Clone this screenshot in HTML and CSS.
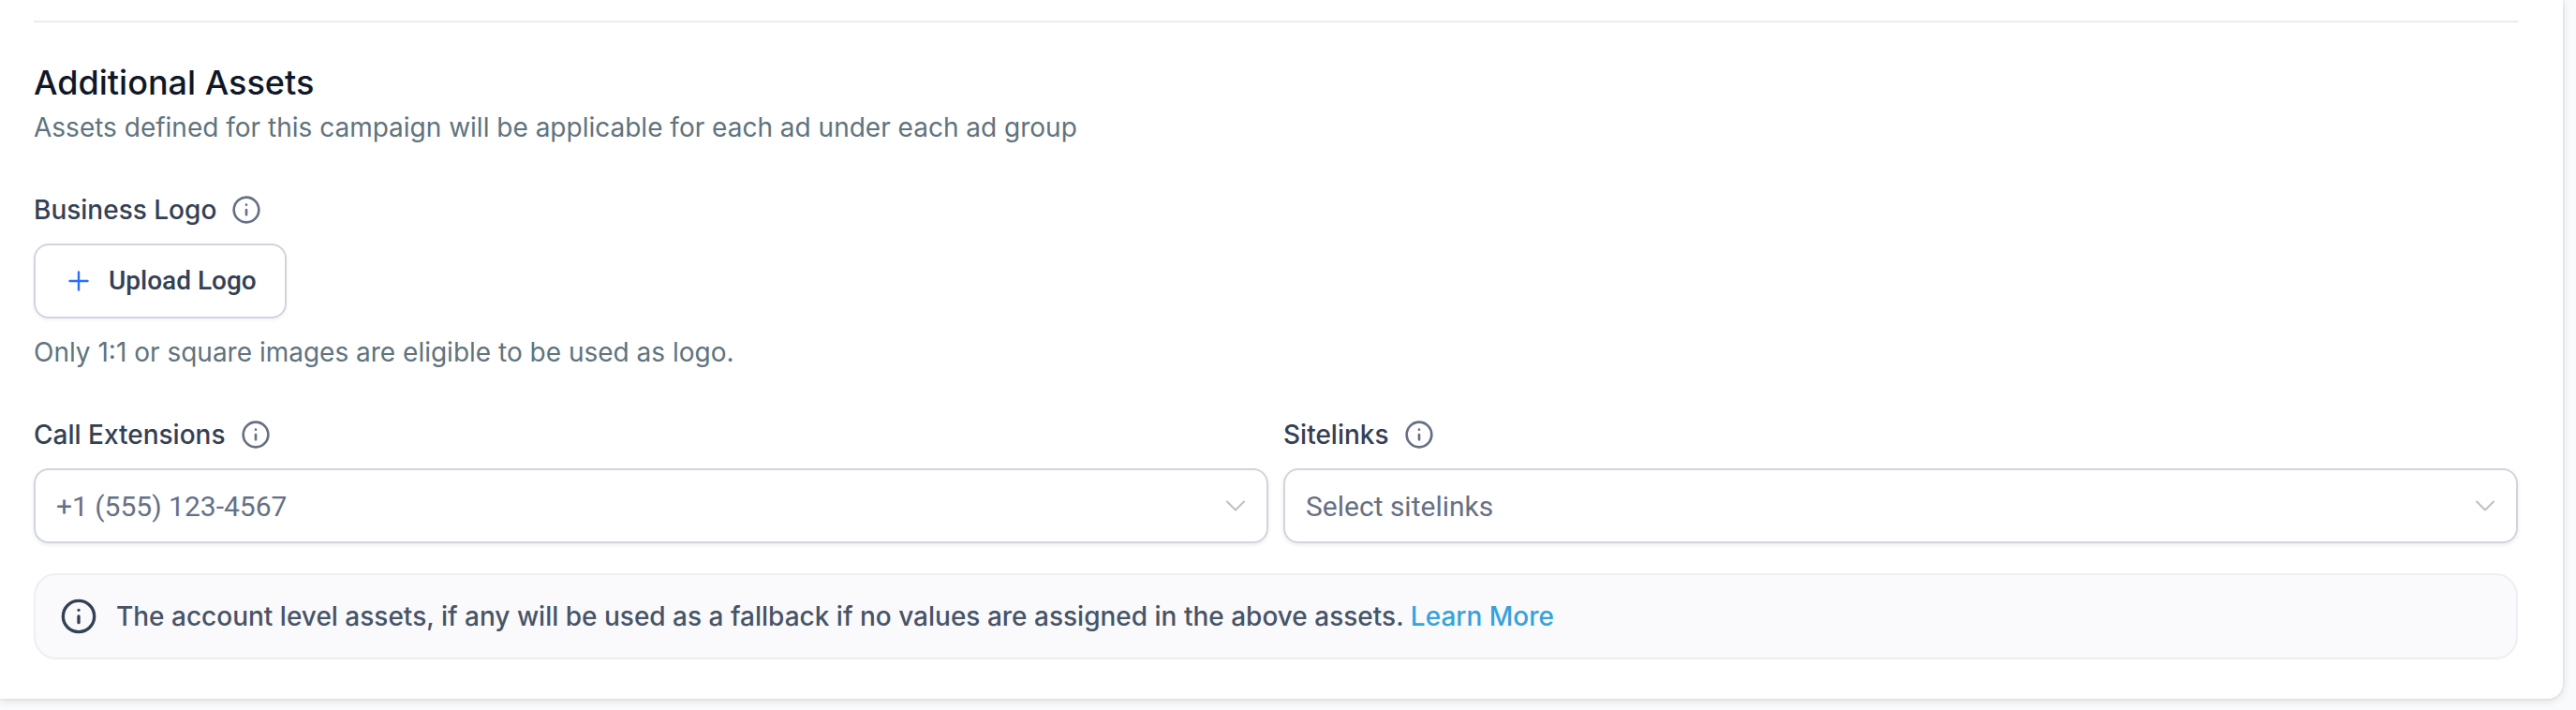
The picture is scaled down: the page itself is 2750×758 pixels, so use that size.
FILE: index.html
```html
<!DOCTYPE html>
<html lang="en">
<head>
  <meta charset="UTF-8">
  <title>Additional Assets</title>
  <link rel="stylesheet" href="styles.css">
</head>
<body>

<!-- shared icons -->
<svg class="sprite" aria-hidden="true">
  <symbol id="icon-info" viewBox="0 0 24 24">
    <circle cx="12" cy="12" r="10"/>
    <path d="M12 16v-4M12 8h.01"/>
  </symbol>
  <symbol id="icon-plus" viewBox="0 0 24 24">
    <path d="M12 2.5v19M2.5 12h19"/>
  </symbol>
  <symbol id="icon-chevron" viewBox="0 0 20 12">
    <path d="M1 1.5l9 9 9-9"/>
  </symbol>
</svg>

<main class="card">
  <section class="assets">
    <h2 class="title">Additional Assets</h2>
    <p class="hint">Assets defined for this campaign will be applicable for each ad under each ad group</p>

    <div class="field">
      <div class="field-head">
        <label for="uploadLogo">Business Logo</label>
        <svg class="icon-info"><use href="#icon-info"/></svg>
      </div>
      <button type="button" class="upload" id="uploadLogo">
        <svg class="icon-plus"><use href="#icon-plus"/></svg>
        Upload Logo
      </button>
      <p class="hint upload-hint">Only 1:1 or square images are eligible to be used as logo.</p>
    </div>

    <div class="row">
      <div class="field">
        <div class="field-head">
          <label for="callExtensions">Call Extensions</label>
          <svg class="icon-info"><use href="#icon-info"/></svg>
        </div>
        <div class="select">
          <select id="callExtensions">
            <option>+1 (555) 123-4567</option>
          </select>
          <svg class="icon-chevron"><use href="#icon-chevron"/></svg>
        </div>
      </div>
      <div class="field">
        <div class="field-head">
          <label for="sitelinks">Sitelinks</label>
          <svg class="icon-info"><use href="#icon-info"/></svg>
        </div>
        <div class="select">
          <select id="sitelinks">
            <option>Select sitelinks</option>
          </select>
          <svg class="icon-chevron"><use href="#icon-chevron"/></svg>
        </div>
      </div>
    </div>

    <div class="notice">
      <svg class="icon-notice"><use href="#icon-info"/></svg>
      <p>The account level assets, if any will be used as a fallback if no values are assigned in the above assets. <a href="#">Learn More</a></p>
    </div>
  </section>
</main>

</body>
</html>
```
FILE: styles.css
```css
* {
  box-sizing: border-box;
}

body {
  min-height: 100vh;
  margin: 0;
  padding: 0 14px 12px 0;
  background-color: #f9fafb;
  font-family: Inter, sans-serif;
  font-size: 28px;
  line-height: 40px;
  color: #344054;
}

h2, p {
  margin: 0;
}

svg {
  flex: none;
  fill: none;
  stroke: currentColor;
  stroke-linecap: round;
  stroke-linejoin: round;
}

.sprite {
  display: none;
}

.card {
  padding: 22px 48px 42px 36px;
  background-color: #fff;
  border-radius: 0 0 16px 0;
  box-shadow: 0 0 0 2px rgba(16, 24, 40, 0.03), 0 2px 8px rgba(16, 24, 40, 0.12);
}

.assets {
  padding-top: 36px;
  border-top: 2px solid #eaecf0;
}

.title {
  font-size: 36px;
  font-weight: 500;
  line-height: 56px;
  color: #101828;
}

.hint {
  color: #60737d;
}

.field {
  margin-top: 48px;
}

.field-head {
  display: flex;
  align-items: center;
  gap: 16px;
  margin-bottom: 16px;
  font-weight: 500;
}

.icon-info {
  width: 32px;
  height: 32px;
  stroke-width: 2;
  color: #667085;
}

.upload {
  display: flex;
  align-items: center;
  gap: 20px;
  height: 80px;
  padding: 0 30px 0 34px;
  font: 500 28px/40px Roboto, sans-serif;
  color: #344054;
  background-color: #fff;
  border: 2px solid #d0d5dd;
  border-radius: 16px;
  box-shadow: 0 2px 4px rgba(16, 24, 40, 0.05);
  cursor: pointer;
}

.icon-plus {
  width: 24px;
  height: 24px;
  stroke-width: 2.4;
  color: #2970ff;
}

.upload-hint {
  margin-top: 16px;
}

.row {
  display: grid;
  grid-template-columns: 1fr 1fr;
  gap: 16px;
}

.select {
  display: grid;
  align-items: center;
}

.select select,
.select svg {
  grid-area: 1 / 1;
}

.select select {
  width: 100%;
  height: 80px;
  padding: 0 72px 0 22px;
  appearance: none;
  font-family: Roboto, sans-serif;
  font-size: 30px;
  color: #667085;
  background-color: #fff;
  border: 2px solid #d0d5dd;
  border-radius: 16px;
  box-shadow: 0 2px 4px rgba(16, 24, 40, 0.08);
}

.icon-chevron {
  justify-self: end;
  width: 20px;
  height: 12px;
  margin-right: 25px;
  stroke-width: 2;
  color: #bfbfbf;
  pointer-events: none;
}

.notice {
  display: flex;
  align-items: center;
  gap: 20px;
  margin-top: 32px;
  padding: 24px 26px;
  font-weight: 500;
  color: #475467;
  background-color: #fafafc;
  border: 2px solid #eeeef3;
  border-radius: 24px;
}

.notice a {
  color: #36a2db;
  text-decoration: none;
}

.icon-notice {
  width: 40px;
  height: 40px;
  stroke-width: 2;
  color: #344054;
}
```
